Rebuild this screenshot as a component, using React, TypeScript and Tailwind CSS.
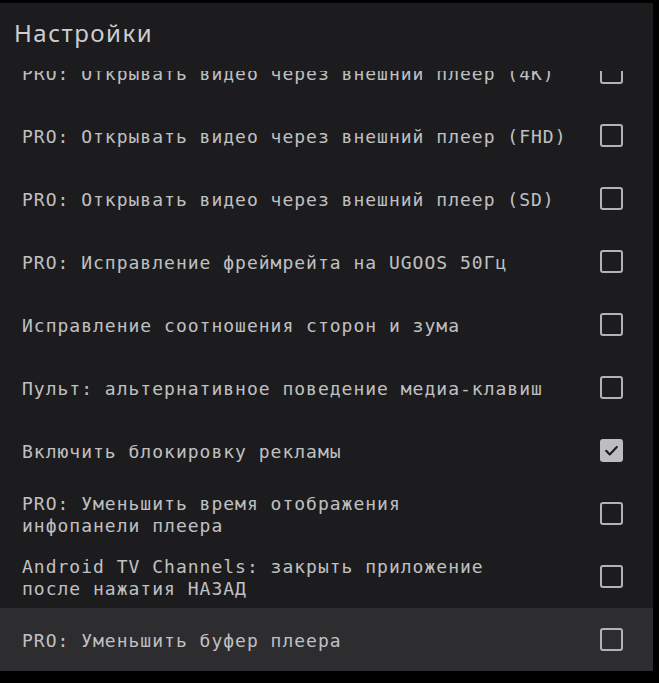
const mono = "font-['DejaVu_Sans_Mono','Liberation_Mono',monospace]"

type Setting = {
  label: string[]
  checked?: boolean
  focused?: boolean
}

const settings: Setting[] = [
  { label: ["PRO: Открывать видео через внешний плеер (4K)"] },
  { label: ["PRO: Открывать видео через внешний плеер (FHD)"] },
  { label: ["PRO: Открывать видео через внешний плеер (SD)"] },
  { label: ["PRO: Исправление фреймрейта на UGOOS 50Гц"] },
  { label: ["Исправление соотношения сторон и зума"] },
  { label: ["Пульт: альтернативное поведение медиа-клавиш"] },
  { label: ["Включить блокировку рекламы"], checked: true },
  { label: ["PRO: Уменьшить время отображения", "инфопанели плеера"] },
  { label: ["Android TV Channels: закрыть приложение", "после нажатия НАЗАД"] },
  { label: ["PRO: Уменьшить буфер плеера"], focused: true },
]

function CheckBox({ checked }: { checked?: boolean }) {
  if (checked) {
    return (
      <span className="flex h-[23px] w-[23px] items-center justify-center rounded-[3px] bg-[#bdbdbf]">
        <svg width="17" height="17" viewBox="0 0 24 24" fill="none" aria-hidden>
          <path
            d="M4.5 12.5l5 5L19.5 7"
            stroke="#1c1c1e"
            strokeWidth="3"
            strokeLinecap="round"
            strokeLinejoin="round"
          />
        </svg>
      </span>
    )
  }
  return <span className="block h-[23px] w-[23px] rounded-[3px] border-[2.5px] border-[#b3b3b5]" />
}

function SettingRow({ label, checked, focused }: Setting) {
  return (
    <div
      className={`flex h-[63px] items-center justify-between pr-[30px] pl-[22px] ${
        focused ? "bg-[#2d2d2f]" : ""
      }`}
    >
      <div className={`${mono} pt-[2px] text-[18px] leading-[22px] tracking-[1px] whitespace-pre text-[#c0c0c2]`}>
        {label.map((line) => (
          <div key={line}>{line}</div>
        ))}
      </div>
      <CheckBox checked={checked} />
    </div>
  )
}

export default function App() {
  return (
    <div className="h-[683px] w-[659px] bg-black pt-[3px]">
      <div className="flex h-[668px] w-[653px] flex-col bg-[#1c1c1e]">
        <div className="h-[68px] shrink-0 pt-[18px] pl-[14px]">
          <h1 className="font-['Noto_Sans','Open_Sans',sans-serif] text-[24px] leading-none tracking-[1.5px] text-[#cdcdcf]">
            Настройки
          </h1>
        </div>
        <div className="h-[600px] overflow-hidden">
          <div className="-mt-[30px]">
            {settings.map((s) => (
              <SettingRow key={s.label[0]} {...s} />
            ))}
          </div>
        </div>
      </div>
    </div>
  )
}
